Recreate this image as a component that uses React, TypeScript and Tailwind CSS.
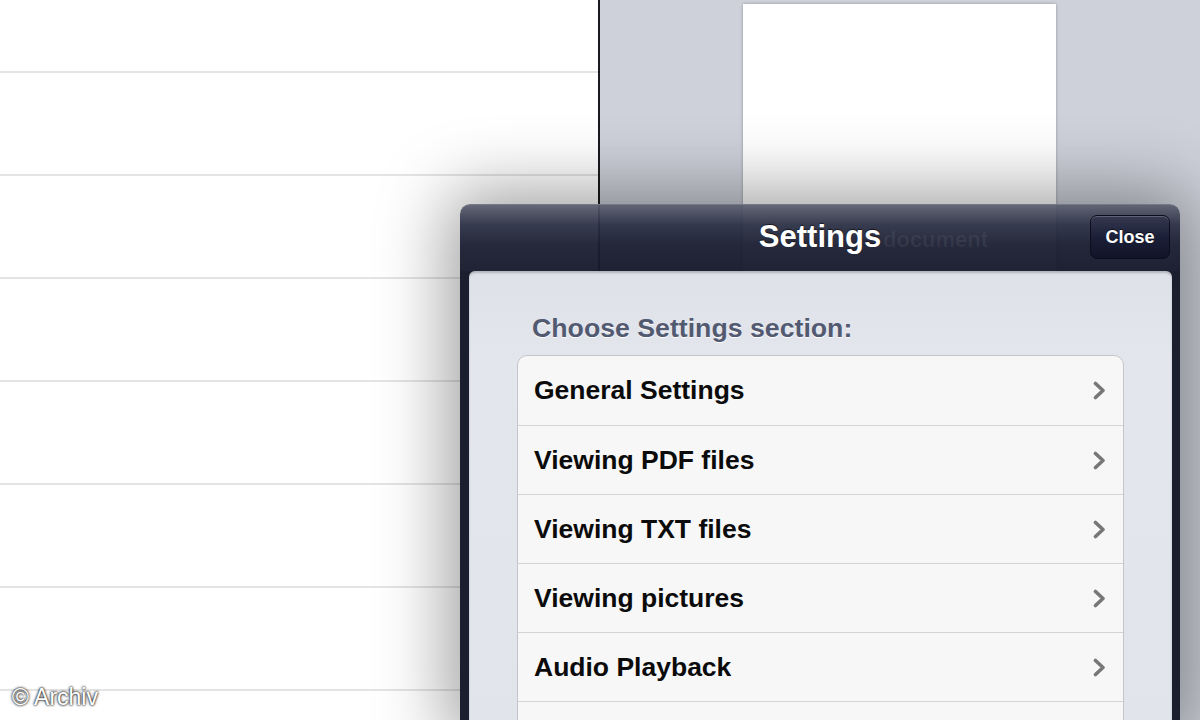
const sections = ['General Settings', 'Viewing PDF files', 'Viewing TXT files', 'Viewing pictures', 'Audio Playback', ''];

function Chevron() {
  return (
    <svg width="15" height="19" viewBox="0 0 15 19" fill="none" aria-hidden>
      <path d="M3.5 2.5 L11 9.5 L3.5 16.5" stroke="#777" strokeWidth="3.6" strokeLinecap="round" strokeLinejoin="round" />
    </svg>
  );
}

function SettingsRow({ label, first }: { label: string; first: boolean }) {
  return (
    <div
      className={
        'flex h-[69px] items-center justify-between pl-[16px] pr-[16px] ' +
        (first ? '' : 'border-t border-[#d3d4d8]')
      }
    >
      <span className="text-[26.5px] font-bold leading-none text-[#0b0b0b]">{label}</span>
      {label && <Chevron />}
    </div>
  );
}

export default function App() {
  return (
    <div className="relative flex h-[720px] w-[1200px] overflow-hidden bg-white font-['Liberation_Sans',Arial,sans-serif]">
      {/* left list */}
      <div className="flex w-[598px] flex-col bg-white">
        <div className="h-[73px] shrink-0 border-b-2 border-[#e4e4e4]" />
        {[0, 1, 2, 3, 4, 5, 6].map((i) => (
          <div key={i} className="h-[103px] shrink-0 border-b-2 border-[#e4e4e4]" />
        ))}
      </div>
      <div className="w-[2px] bg-[#1b1b1f]" />

      {/* right pane with the document page */}
      <div className="flex-1 bg-[#ced1da] pl-[143px] pt-[4px]">
        <div className="h-[420px] w-[313px] bg-white shadow-[0_0_3px_rgba(0,0,0,0.3)]" />
      </div>

      {/* settings popover */}
      <div className="absolute left-[460px] top-[204px] w-[720px] rounded-t-[10px] shadow-[0_0_70px_12px_rgba(0,0,0,0.38)]">
        <div className="relative flex h-[67px] items-center justify-center rounded-t-[10px] border-t border-[#767a88] bg-[linear-gradient(to_bottom,rgba(88,92,108,0.93),rgba(42,47,68,0.94)_30%,rgba(26,30,49,0.95)_60%,rgba(22,26,44,0.96))] pb-[4px]">
          <span className="absolute left-[423px] top-[24px] text-[22px] font-bold leading-none text-white/[0.06]">document</span>
          <span className="relative text-[31px] font-bold leading-none text-white [text-shadow:0_-1px_1px_rgba(0,0,0,0.6)]">Settings</span>
          <button
            type="button"
            className="absolute right-[10px] top-[10px] flex h-[44px] w-[80px] items-center justify-center rounded-[7px] border border-[#0b0d1a] bg-[linear-gradient(to_bottom,#343950,#1b1f37_50%,#121528)] text-[18px] font-bold text-white shadow-[inset_0_1px_0_rgba(255,255,255,0.22)] [text-shadow:0_-1px_0_rgba(0,0,0,0.6)]"
          >
            Close
          </button>
        </div>
        <div className="bg-[#1a1e2f] pl-[9px] pr-[8px]">
          <div className="h-[460px] rounded-t-[6px] bg-[linear-gradient(to_bottom,#dfe1e8,#e4e6ed_20%,#e2e4eb)] px-[48px] pt-[42px] shadow-[inset_0_2px_2px_rgba(0,0,0,0.2)]">
            <div className="pl-[15px] text-[26.7px] font-bold leading-[30px] text-[#525a71] [text-shadow:0_1px_0_rgba(255,255,255,0.9)]">
              Choose Settings section:
            </div>
            <div className="mt-[12px] overflow-hidden rounded-[10px] border border-[#c3c5cb] bg-[#f7f7f7] shadow-[0_1px_0_rgba(255,255,255,0.8)]">
              {sections.map((s, i) => (
                <SettingsRow key={i} label={s} first={i === 0} />
              ))}
            </div>
          </div>
        </div>
      </div>

      {/* watermark */}
      <div className="absolute left-[12px] top-[683px] text-[23px] leading-[28px] text-white [text-shadow:0_0_3px_rgba(0,0,0,0.95),0_0_2px_rgba(0,0,0,0.9)]">
        © Archiv
      </div>
    </div>
  );
}
